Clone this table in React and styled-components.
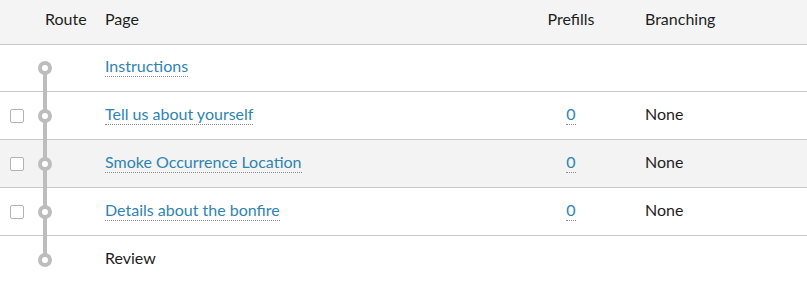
import React from 'react';
import styled, { createGlobalStyle } from 'styled-components';

const GlobalStyle = createGlobalStyle`
  html, body {
    margin: 0;
    padding: 0;
    background: #fff;
  }
  body {
    font-family: Lato, "Open Sans", sans-serif;
    font-size: 16px;
    color: #222;
  }
`;

const COLS = '30px 75px 1fr 90px 191px';

const Table = styled.div`
  width: 807px;
`;

const HeadRow = styled.div`
  display: grid;
  grid-template-columns: ${COLS};
  align-items: center;
  height: 45px;
  padding-bottom: 6px;
  box-sizing: border-box;
  background: #f4f4f4;
  border-bottom: 1px solid #c9c9c9;
`;

const HeadCell = styled.div`
  line-height: 20px;
  color: #1e1e1e;
  text-align: ${p => p.align || 'left'};
  padding-left: ${p => p.pad || 0}px;
`;

const Row = styled.div`
  display: grid;
  grid-template-columns: ${COLS};
  align-items: center;
  height: ${p => p.h}px;
  background: ${p => (p.shaded ? '#f3f3f3' : '#fff')};
  border-bottom: ${p => (p.last ? 'none' : '1px solid #c9c9c9')};
`;

const CheckCell = styled.div`
  display: flex;
  align-items: center;
  padding-left: 10px;
`;

const Check = styled.span`
  display: block;
  width: 12px;
  height: 12px;
  border: 1px solid #b3b3b3;
  border-radius: 2px;
  background: #fff;
`;

const RouteCell = styled.div`
  position: relative;
  align-self: stretch;
  display: flex;
  align-items: center;
  padding-left: 8px;

  &::before,
  &::after {
    content: '';
    position: absolute;
    left: 13px;
    width: 4px;
    background: #bdbdbd;
  }
  &::before {
    display: ${p => (p.first ? 'none' : 'block')};
    top: -1px;
    height: 50%;
  }
  &::after {
    display: ${p => (p.last ? 'none' : 'block')};
    top: 50%;
    bottom: -1px;
  }
`;

const Node = styled.span`
  position: relative;
  z-index: 1;
  display: block;
  width: 6px;
  height: 6px;
  border: 4px solid #bdbdbd;
  border-radius: 50%;
  background: #fff;
`;

const TextCell = styled.div`
  line-height: 20px;
  margin-bottom: 4px;
  text-align: ${p => p.align || 'left'};
  padding-left: ${p => p.pad || 0}px;
  color: #1e1e1e;
`;

const Link = styled.a`
  color: #2f84b1;
  text-decoration: none;
  padding-bottom: 1px;
  border-bottom: 1px dotted #8c8c8c;
  cursor: pointer;
`;

const pages = [
  { title: 'Instructions', link: true, check: false, prefills: null, branching: '' },
  { title: 'Tell us about yourself', link: true, check: true, prefills: 0, branching: 'None' },
  { title: 'Smoke Occurrence Location', link: true, check: true, prefills: 0, branching: 'None' },
  { title: 'Details about the bonfire', link: true, check: true, prefills: 0, branching: 'None' },
  { title: 'Review', link: false, check: false, prefills: null, branching: '' },
];

export default function App() {
  return (
    <>
      <GlobalStyle />
      <Table>
        <HeadRow>
          <HeadCell />
          <HeadCell pad={15}>Route</HeadCell>
          <HeadCell>Page</HeadCell>
          <HeadCell align="center">Prefills</HeadCell>
          <HeadCell pad={29}>Branching</HeadCell>
        </HeadRow>
        {pages.map((p, i) => (
          <Row
            key={p.title}
            h={i === 0 ? 46 : 47}
            shaded={i === 2}
            last={i === pages.length - 1}
          >
            <CheckCell>{p.check && <Check />}</CheckCell>
            <RouteCell first={i === 0} last={i === pages.length - 1}>
              <Node />
            </RouteCell>
            <TextCell>{p.link ? <Link>{p.title}</Link> : p.title}</TextCell>
            <TextCell align="center">
              {p.prefills !== null && <Link>{p.prefills}</Link>}
            </TextCell>
            <TextCell pad={29}>{p.branching}</TextCell>
          </Row>
        ))}
      </Table>
    </>
  );
}
